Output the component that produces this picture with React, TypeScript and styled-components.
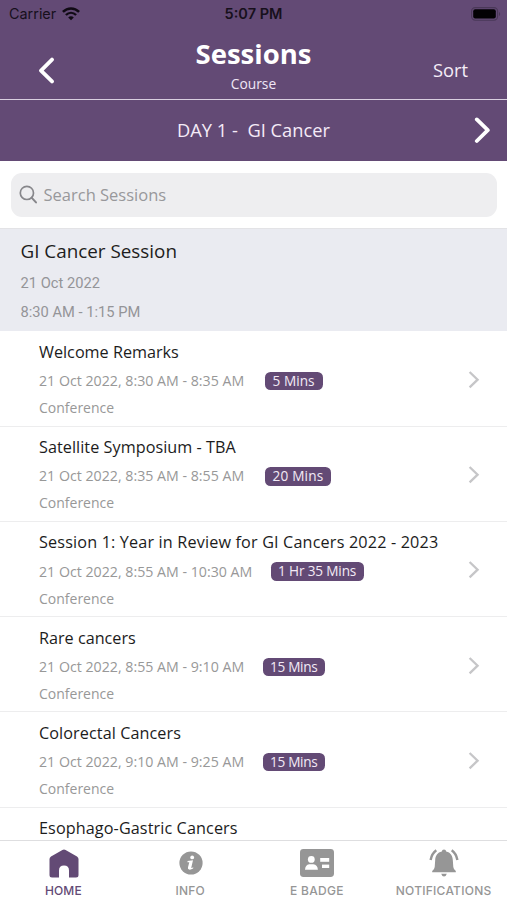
import React from "react";
import styled, { createGlobalStyle } from "styled-components";

const PURPLE = "#634a75";
const GREY = "#989898";

const GlobalStyle = createGlobalStyle`
  * { box-sizing: border-box; }
  body { margin: 0; background: #fff; }
  button { border: 0; padding: 0; background: none; font: inherit; color: inherit; }
`;

const Screen = styled.div`
  display: flex;
  flex-direction: column;
  width: 507px;
  height: 900px;
  overflow: hidden;
  background: #fff;
  font-family: "Open Sans", sans-serif;
`;

const StatusBar = styled.div`
  display: grid;
  grid-template-columns: 1fr auto 1fr;
  align-items: center;
  flex: none;
  height: 28px;
  padding: 0 6px 0 9px;
  background: ${PURPLE};
  color: #17101c;
  font-family: Inter, sans-serif;
`;

const Carrier = styled.div`
  display: flex;
  align-items: center;
  gap: 6px;
  padding-bottom: 1px;
  font-size: 14.4px;
`;

const Clock = styled.div`
  padding: 0 3px 1px 0;
  font-size: 14.5px;
  font-weight: 600;
`;

const BatterySlot = styled.div`
  display: flex;
  justify-content: flex-end;
  padding-bottom: 1px;
`;

const NavBar = styled.header`
  display: grid;
  grid-template-columns: 130px 1fr 130px;
  flex: none;
  height: 72px;
  border-bottom: 1.5px solid #d9cfe0;
  background: ${PURPLE};
  color: #fff;
`;

const BackButton = styled.button`
  display: flex;
  align-items: flex-start;
  padding: 29px 0 0 37px;
`;

const Heading = styled.div`
  text-align: center;
`;

const Title = styled.h1`
  margin: 9px 0 0;
  font-size: 27.5px;
  font-weight: 700;
  line-height: 34px;
`;

const Subtitle = styled.div`
  padding-top: 3.5px;
  font-size: 13.8px;
  line-height: 18px;
  color: #f0e6f5;
`;

const SortButton = styled.button`
  align-self: start;
  justify-self: end;
  padding: 30px 39px 0 0;
  font-size: 18.3px;
  line-height: 24px;
  color: #f5edf8;
`;

const DayBar = styled.div`
  display: grid;
  grid-template-columns: 1fr auto 1fr;
  align-items: center;
  flex: none;
  height: 60.5px;
  padding: 0 15.5px;
  background: ${PURPLE};
  color: #f5ebf8;
`;

const DayLabel = styled.div`
  grid-column: 2;
  padding-bottom: 2px;
  font-size: 18.3px;
  white-space: pre;
`;

const NextButton = styled.button`
  display: flex;
  justify-self: end;
`;

const SearchArea = styled.div`
  flex: none;
  height: 68px;
  padding: 12.5px 10px 0 11px;
  border-bottom: 1px solid #e3e3e6;
`;

const SearchField = styled.div`
  display: flex;
  align-items: center;
  gap: 5.5px;
  height: 43.5px;
  padding-left: 8px;
  padding-bottom: 1px;
  border-radius: 11px;
  background: #eeeef0;
  color: #98989b;
  font-size: 16.5px;
`;

const SectionHeader = styled.div`
  flex: none;
  height: 102.75px;
  padding: 9px 20.5px 0;
  background: #eaebf1;
`;

const SectionTitle = styled.h2`
  margin: 0 0 5.6px;
  color: #1d1d20;
  font-size: 18.85px;
  font-weight: 400;
  line-height: 26px;
`;

const SectionMeta = styled.div`
  color: #949498;
  font-family: Roboto, sans-serif;
  font-size: 14.7px;
  line-height: 29.3px;
`;

const SessionList = styled.ul`
  flex: 1;
  min-height: 0;
  margin: 0;
  padding: 0;
  overflow: hidden;
  list-style: none;
`;

const SessionRow = styled.li`
  display: flex;
  justify-content: space-between;
  height: 95.25px;
  padding: 8.6px 27px 0 39px;
  border-bottom: 1.5px solid #ededee;

  &:last-child {
    height: auto;
    padding-top: 8px;
    border-bottom: 0;
  }
`;

const SessionTitle = styled.div<{ $tracking?: number }>`
  color: #1c1c1c;
  font-size: 16.2px;
  line-height: 24px;
  letter-spacing: ${(p) => p.$tracking ?? 0}px;
  white-space: nowrap;
`;

const SessionTime = styled.div<{ $width: number }>`
  display: grid;
  grid-template-columns: ${(p) => p.$width}px auto;
  justify-content: start;
  align-items: center;
  gap: 20px;
  height: 28px;
  margin-top: 3.2px;
  color: ${GREY};
  font-size: 14.2px;
  line-height: 18px;
  white-space: nowrap;
`;

const Duration = styled.span<{ $tracking: number }>`
  height: 18.5px;
  padding: 0 8px 0 7.5px;
  border-radius: 5.5px;
  background: ${PURPLE};
  color: #f3eaf6;
  font-size: 13.6px;
  line-height: 18px;
  letter-spacing: ${(p) => p.$tracking}px;
`;

const Category = styled.div`
  color: ${GREY};
  font-size: 14px;
  line-height: 25.2px;
`;

const RowArrow = styled.div`
  padding-top: 31px;
`;

const TabBar = styled.nav`
  display: grid;
  grid-template-columns: repeat(4, 1fr);
  flex: none;
  height: 60px;
  border-top: 1.5px solid #dedee0;
  background: #fff;
  font-family: Inter, sans-serif;
`;

const Tab = styled.button<{ $active?: boolean; $tracking: number }>`
  display: flex;
  flex-direction: column;
  align-items: center;
  padding-top: 6.5px;
  color: ${(p) => (p.$active ? PURPLE : "#969696")};
  font-size: 12px;
  font-weight: ${(p) => (p.$active ? 550 : 480)};
  line-height: 16px;
  letter-spacing: ${(p) => p.$tracking}px;
`;

const TabIcon = styled.span`
  display: flex;
  align-items: center;
  height: 31px;
  padding-left: 1px;
  margin-bottom: 4px;
`;

const WifiIcon = () => (
  <svg width="18" height="14" viewBox="0 0 18 14" fill="none" stroke="#100a14">
    <path d="M0.9 4.9C5.6 0.2 12.4 0.2 17.1 4.9" strokeWidth="2.5" />
    <path d="M3.9 8C6.9 5.1 11.1 5.1 14.1 8" strokeWidth="2.4" />
    <path d="M9 13.2 6.2 10.4C7.7 9 10.3 9 11.8 10.4Z" fill="#100a14" stroke="none" />
  </svg>
);

const BatteryIcon = () => (
  <svg width="30" height="14" viewBox="0 0 30 14">
    <rect x="0.6" y="0.6" width="26" height="12.6" rx="3.6" fill="none" stroke="#4a3858" strokeWidth="1.1" />
    <rect x="2.2" y="2.2" width="22.6" height="9.4" rx="2" fill="#030104" />
    <path d="M28 5v4c1.5-.6 1.5-3.4 0-4Z" fill="#4a3858" />
  </svg>
);

const BackIcon = () => (
  <svg width="19" height="27" viewBox="0 0 19 27" fill="none" stroke="#fff" strokeWidth="3.8" strokeLinecap="round" strokeLinejoin="round">
    <path d="M15 2.6 4 13.6 15 24.4" />
  </svg>
);

const NextIcon = () => (
  <svg width="19" height="27" viewBox="0 0 19 27" fill="none" stroke="#fff" strokeWidth="3.8" strokeLinecap="round" strokeLinejoin="round">
    <path d="M3.8 2.4 14.8 13.2 3.8 24" />
  </svg>
);

const SearchIcon = () => (
  <svg width="19" height="19" viewBox="0 0 19 19" fill="none" stroke="#87878b" strokeWidth="1.7" strokeLinecap="round">
    <circle cx="7.9" cy="7.9" r="6.6" />
    <path d="m12.8 12.8 4.2 4.6" strokeWidth="2" />
  </svg>
);

const ArrowIcon = () => (
  <svg width="13" height="18" viewBox="0 0 13 18" fill="none" stroke="#c6c6c8" strokeWidth="2.3">
    <path d="M2.6 1 10.6 8.7 2.6 16.4" />
  </svg>
);

const HomeIcon = () => (
  <svg width="30" height="29" viewBox="0 0 30 29" fill="currentColor">
    <path d="M13.4 1Q15 0 16.6 1L28 7.4Q29.5 8.4 29.5 10V26Q29.5 28.5 27 28.5H20V21.5Q20 16.6 15 16.6T10 21.5V28.5H3Q.5 28.5.5 26V10Q.5 8.4 2 7.4Z" />
  </svg>
);

const InfoIcon = () => (
  <svg width="24" height="24" viewBox="0 0 24 24">
    <circle cx="12" cy="12" r="11.6" fill="currentColor" />
    <circle cx="13.2" cy="6.4" r="1.9" fill="#fff" />
    <path d="M8.6 10.1 14 9.3 12.3 16.6Q12.2 17.5 14.3 16.3L14.1 17.6Q11.7 19.1 10 18.6 8.5 18.1 9 16.2L10.3 11.2 8.4 11.3Z" fill="#fff" />
  </svg>
);

const BadgeIcon = () => (
  <svg width="34" height="28" viewBox="0 0 34 28">
    <rect width="34" height="28" rx="3.4" fill="currentColor" />
    <g fill="#fff">
      <circle cx="11.3" cy="10.4" r="3.4" />
      <path d="M5 20.8Q5.3 15.7 9.2 15.2H13.4Q17.6 15.7 17.9 20.8Z" />
      <rect x="20.2" y="9" width="9" height="3.8" />
      <rect x="22" y="15.6" width="7.2" height="3.4" />
    </g>
  </svg>
);

const BellIcon = () => (
  <svg width="30" height="28" viewBox="0 0 30 28" fill="currentColor">
    <path d="M15 .6Q17 .6 17.2 2.4C21.5 3.3 23.6 6.6 23.8 11L24.3 18Q24.6 20.5 26.8 22V23.2H3.2V22Q5.4 20.5 5.7 18L6.2 11C6.4 6.6 8.5 3.3 12.8 2.4Q13 .6 15 .6Z" />
    <path d="M12.2 24.8H17.8Q17 27.6 15 27.6T12.2 24.8Z" />
    <path d="M7.3 1.3Q2.8 4.6 1.6 11M22.7 1.3Q27.2 4.6 28.4 11" fill="none" stroke="currentColor" strokeWidth="2.4" />
  </svg>
);

interface Slot {
  time: string;
  width: number;
  duration: string;
  tracking: number;
}

interface Session {
  title: string;
  tracking?: number;
  slot?: Slot;
}

const sessions: Session[] = [
  { title: "Welcome Remarks", slot: { time: "21 Oct 2022, 8:30 AM - 8:35 AM", width: 206, duration: "5 Mins", tracking: 0.05 } },
  { title: "Satellite Symposium - TBA", tracking: 0.05, slot: { time: "21 Oct 2022, 8:35 AM - 8:55 AM", width: 206, duration: "20 Mins", tracking: 0.2 } },
  { title: "Session 1: Year in Review for GI Cancers 2022 - 2023", tracking: 0.16, slot: { time: "21 Oct 2022, 8:55 AM - 10:30 AM", width: 211.5, duration: "1 Hr 35 Mins", tracking: -0.15 } },
  { title: "Rare cancers", slot: { time: "21 Oct 2022, 8:55 AM - 9:10 AM", width: 203.5, duration: "15 Mins", tracking: -0.3 } },
  { title: "Colorectal Cancers", tracking: 0.08, slot: { time: "21 Oct 2022, 9:10 AM - 9:25 AM", width: 203.5, duration: "15 Mins", tracking: -0.3 } },
  { title: "Esophago-Gastric Cancers", tracking: 0.1 },
];

export default function App() {
  return (
    <Screen>
      <GlobalStyle />
      <StatusBar>
        <Carrier>Carrier <WifiIcon /></Carrier>
        <Clock>5:07 PM</Clock>
        <BatterySlot><BatteryIcon /></BatterySlot>
      </StatusBar>
      <NavBar>
        <BackButton aria-label="Back"><BackIcon /></BackButton>
        <Heading>
          <Title>Sessions</Title>
          <Subtitle>Course</Subtitle>
        </Heading>
        <SortButton>Sort</SortButton>
      </NavBar>
      <DayBar>
        <DayLabel>{"DAY 1 -  GI Cancer"}</DayLabel>
        <NextButton aria-label="Next day"><NextIcon /></NextButton>
      </DayBar>
      <SearchArea>
        <SearchField><SearchIcon />Search Sessions</SearchField>
      </SearchArea>
      <SectionHeader>
        <SectionTitle>GI Cancer Session</SectionTitle>
        <SectionMeta>21 Oct 2022</SectionMeta>
        <SectionMeta>8:30 AM - 1:15 PM</SectionMeta>
      </SectionHeader>
      <SessionList>
        {sessions.map(({ title, tracking, slot }) => (
          <SessionRow key={title}>
            <div>
              <SessionTitle $tracking={tracking}>{title}</SessionTitle>
              {slot && (
                <>
                  <SessionTime $width={slot.width}>
                    {slot.time}
                    <Duration $tracking={slot.tracking}>{slot.duration}</Duration>
                  </SessionTime>
                  <Category>Conference</Category>
                </>
              )}
            </div>
            {slot && <RowArrow><ArrowIcon /></RowArrow>}
          </SessionRow>
        ))}
      </SessionList>
      <TabBar>
        <Tab $active $tracking={0.15}><TabIcon><HomeIcon /></TabIcon>HOME</Tab>
        <Tab $tracking={0.2}><TabIcon><InfoIcon /></TabIcon>INFO</Tab>
        <Tab $tracking={0.3}><TabIcon><BadgeIcon /></TabIcon>E BADGE</Tab>
        <Tab $tracking={0.25}><TabIcon><BellIcon /></TabIcon>NOTIFICATIONS</Tab>
      </TabBar>
    </Screen>
  );
}
